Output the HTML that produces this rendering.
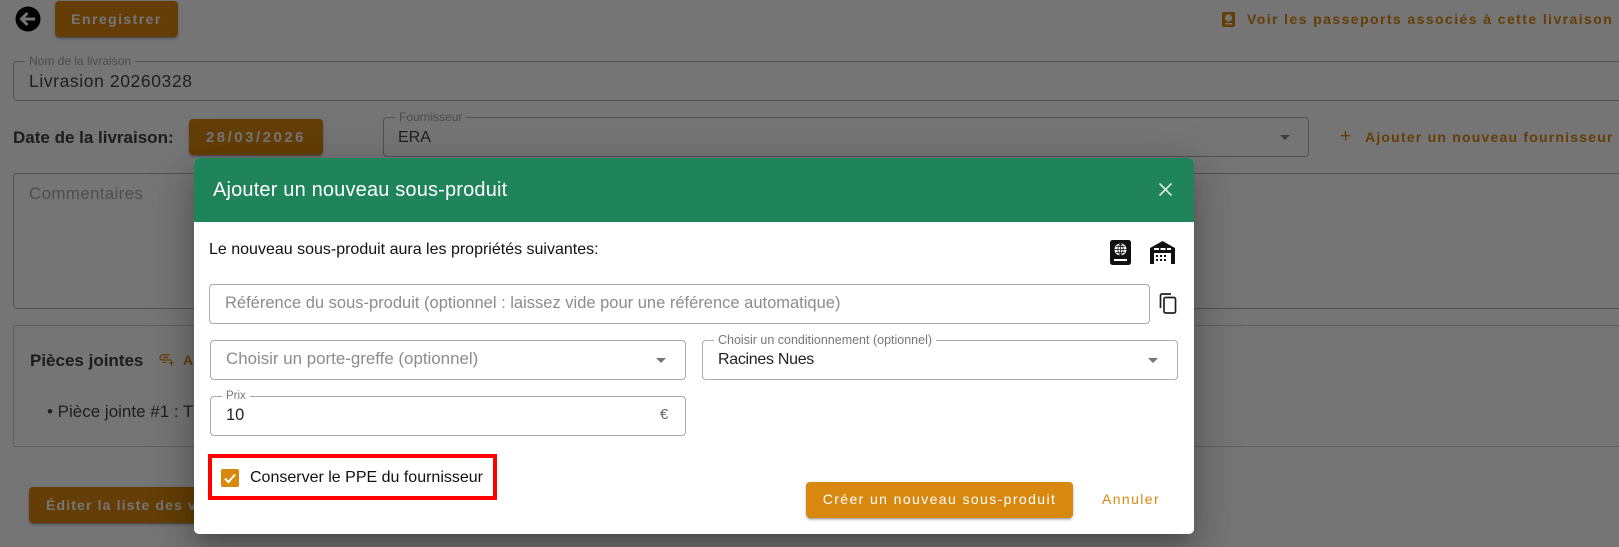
<!DOCTYPE html>
<html><head><meta charset="utf-8"><style>
*{box-sizing:border-box;margin:0;padding:0}
html,body{width:1619px;height:547px;overflow:hidden;background:#fff}
body{position:relative;font-family:"Liberation Sans",sans-serif}
.a{position:absolute;white-space:nowrap}
.bk{position:absolute;left:0;top:0;width:1619px;height:547px;background:rgba(0,0,0,.54)}
.btn{position:absolute;background:#d9880f;border-radius:4px;color:#fff;font-weight:bold;font-size:14px;letter-spacing:1.45px;display:flex;align-items:center;justify-content:center;box-shadow:0 3px 1px -2px rgba(0,0,0,.2),0 2px 2px rgba(0,0,0,.14),0 1px 5px rgba(0,0,0,.12)}
.f{position:absolute;border:1px solid #b4b4b4;border-radius:4px}
.g{position:absolute;border:1px solid #ababab;border-radius:4px;background:#fff}
.lab{position:absolute;background:#fff;padding:0 4px;font-size:12.500px;color:#777;line-height:12px}
.arr{position:absolute;width:0;height:0;border-left:5px solid transparent;border-right:5px solid transparent;border-top:5px solid #757575}
.o{color:#d9880f;font-weight:bold;font-size:14px;letter-spacing:1.42px}
</style></head><body>
<svg class="a" style="left:15px;top:6px" width="26" height="26" viewBox="0 0 26 26"><circle cx="13" cy="13" r="12.500" fill="#000"/><path d="M20 13H7M12.500 7L6.500 13l6 6" fill="none" stroke="#fff" stroke-width="3"/></svg>
<div class="btn" style="left:55px;top:1px;width:123px;height:36px">Enregistrer</div>
<svg class="a" style="left:1222px;top:12px" width="13" height="15" viewBox="0 0 13 15"><rect width="13" height="15" rx="1.500" fill="#d9880f"/><circle cx="6.500" cy="6" r="3.600" fill="#fff"/><rect x="3" y="11" width="7" height="1.500" fill="#fff"/></svg>
<div class="a o" style="left:1247px;top:11px">Voir les passeports associés à cette livraison</div>

<div class="f" style="left:13px;top:61px;width:1640px;height:40px"></div>
<div class="lab" style="left:25px;top:55px;font-size:12px;color:#a5a5a5">Nom de la livraison</div>
<div class="a" style="left:29px;top:71px;font-size:17.500px;color:#444;letter-spacing:.6px">Livrasion 20260328</div>

<div class="a" style="left:13px;top:128px;font-size:17px;font-weight:bold;color:#404040">Date de la livraison:</div>
<div class="btn" style="left:189px;top:119px;width:134px;height:36px;font-size:15px;letter-spacing:2.500px">28/03/2026</div>
<div class="f" style="left:383px;top:117px;width:926px;height:40px"></div>
<div class="lab" style="left:395px;top:111px;font-size:12px;color:#a5a5a5">Fournisseur</div>
<div class="a" style="left:398px;top:129px;font-size:16px;color:#444">ERA</div>
<div class="arr" style="left:1280px;top:135px;border-top-color:#888"></div>
<div class="a" style="left:1340px;top:125px;color:#d9880f;font-size:19px;line-height:24px">+</div>
<div class="a o" style="left:1365px;top:129px;letter-spacing:1.210px">Ajouter un nouveau fournisseur</div>

<div class="f" style="left:13px;top:173px;width:1640px;height:136px"></div>
<div class="a" style="left:29px;top:184px;font-size:17px;color:#aaa;letter-spacing:.3px">Commentaires</div>

<div class="a" style="left:13px;top:325px;width:1640px;height:122px;border:1px solid rgba(0,0,0,.18)"></div>
<div class="a" style="left:30px;top:351px;font-size:17px;font-weight:bold;color:#404040">Pièces jointes</div>
<svg class="a" style="left:159px;top:353px" width="15" height="13" viewBox="0 0 15 13"><path d="M12 7H3.500a2.500 2.500 0 0 1 0-5H11M9 4.500H4M7 9.500H4" fill="none" stroke="#d9880f" stroke-width="1.300"/><path d="M12.500 7.500v5M10 10h5" stroke="#d9880f" stroke-width="1.300"/></svg>
<div class="a o" style="left:183px;top:352px">Aj</div>
<div class="a" style="left:47px;top:402px;font-size:17px;color:#444">• Pièce jointe #1 : T</div>
<div class="btn" style="left:29px;top:487px;width:300px;height:36px;justify-content:flex-start;padding-left:17px;letter-spacing:1.150px">Éditer la liste des végétaux</div>

<div class="bk"></div>

<div class="a" style="left:194px;top:158px;width:1000px;height:376px;background:#fff;border-radius:5px;overflow:hidden;box-shadow:0 11px 15px -7px rgba(0,0,0,.2),0 24px 38px 3px rgba(0,0,0,.14),0 9px 46px 8px rgba(0,0,0,.12)">
<div style="height:64px;background:#1f845a"></div>
</div>
<div class="a" style="left:213px;top:178px;font-size:20px;line-height:24px;color:#fff;letter-spacing:.17px">Ajouter un nouveau sous-produit</div>
<svg class="a" style="left:1158px;top:182px" width="15" height="15" viewBox="0 0 15 15"><path d="M1.500 1.500L13.500 13.500M13.500 1.500L1.500 13.500" stroke="#dfe9e4" stroke-width="1.600" fill="none"/></svg>

<div class="a" style="left:209px;top:241px;font-size:16px;line-height:18px;color:#111">Le nouveau sous-produit aura les propriétés suivantes:</div>

<svg class="a" style="left:1110px;top:240px" width="21" height="25" viewBox="0 0 21 25"><rect width="21" height="25" rx="2.500" fill="#111"/><circle cx="10.500" cy="9.500" r="6" fill="#fff"/><path d="M4.500 9.500H16.500M10.500 3.500V15.500M6 6.500H15M6 12.500H15M10.500 3.500C7 7 7 12 10.500 15.500C14 12 14 7 10.500 3.500" stroke="#111" stroke-width=".8" fill="none"/><rect x="4" y="19" width="13" height="2" fill="#fff"/></svg>
<svg class="a" style="left:1150px;top:241px" width="25" height="23" viewBox="0 0 25 23"><path d="M0 7L12.500 0L25 7V23H0Z" fill="#111"/><path d="M4 7h5v2H4zM10.500 7h5v2h-5zM17 7h4v2h-4z" fill="#fff"/><rect x="4" y="12" width="17" height="11" fill="#fff"/><path d="M6 14h2v2H6zM10 14h2v2h-2zM14 14h2v2h-2zM6 18h2v2H6zM10 18h2v2h-2zM14 18h2v2h-2z" fill="#111"/></svg>

<div class="g" style="left:209px;top:284px;width:941px;height:40px"></div>
<div class="a" style="left:225px;top:294px;font-size:16.500px;line-height:18px;color:#8c8c8c">Référence du sous-produit (optionnel : laissez vide pour une référence automatique)</div>
<svg class="a" style="left:1159px;top:293px" width="18" height="21" viewBox="0 0 18 21"><path d="M1.500 15V2.500a1.500 1.500 0 0 1 1.500-1.500H12" fill="none" stroke="#222" stroke-width="1.700"/><rect x="5" y="4.500" width="11.500" height="15.500" rx="1.500" fill="none" stroke="#222" stroke-width="1.700"/></svg>

<div class="g" style="left:210px;top:340px;width:476px;height:40px"></div>
<div class="a" style="left:226px;top:350px;font-size:16.900px;line-height:18px;color:#8c8c8c">Choisir un porte-greffe (optionnel)</div>
<div class="arr" style="left:656px;top:358px"></div>
<div class="g" style="left:702px;top:340px;width:476px;height:40px"></div>
<div class="lab" style="left:714px;top:334px">Choisir un conditionnement (optionnel)</div>
<div class="a" style="left:718px;top:351px;font-size:16px;letter-spacing:-.3px;line-height:18px;color:#222">Racines Nues</div>
<div class="arr" style="left:1148px;top:358px"></div>

<div class="g" style="left:210px;top:396px;width:476px;height:40px"></div>
<div class="lab" style="left:222px;top:390px;font-size:11.500px">Prix</div>
<div class="a" style="left:226px;top:406px;font-size:16.500px;line-height:18px;color:#222">10</div>
<div class="a" style="left:660px;top:406px;font-size:15px;line-height:18px;color:#666">€</div>

<div class="a" style="left:208px;top:454px;width:289px;height:46px;border:4px solid #f00"></div>
<div class="a" style="left:221px;top:469px;width:18px;height:18px;background:#d9880f;border-radius:2px"></div>
<svg class="a" style="left:221px;top:469px" width="18" height="18" viewBox="0 0 18 18"><path d="M4 9.500L7.500 13L14 5.500" fill="none" stroke="#fff" stroke-width="2"/></svg>
<div class="a" style="left:250px;top:469px;font-size:16px;line-height:18px;color:#111">Conserver le PPE du fournisseur</div>

<div class="btn" style="left:806px;top:482px;width:267px;height:36px;font-weight:normal;letter-spacing:1.400px;font-size:14px;padding-bottom:2px">Créer un nouveau sous-produit</div>
<div class="a" style="left:1102px;top:490px;font-size:14px;line-height:18px;color:#d9880f;letter-spacing:1.400px">Annuler</div>
</body></html>
